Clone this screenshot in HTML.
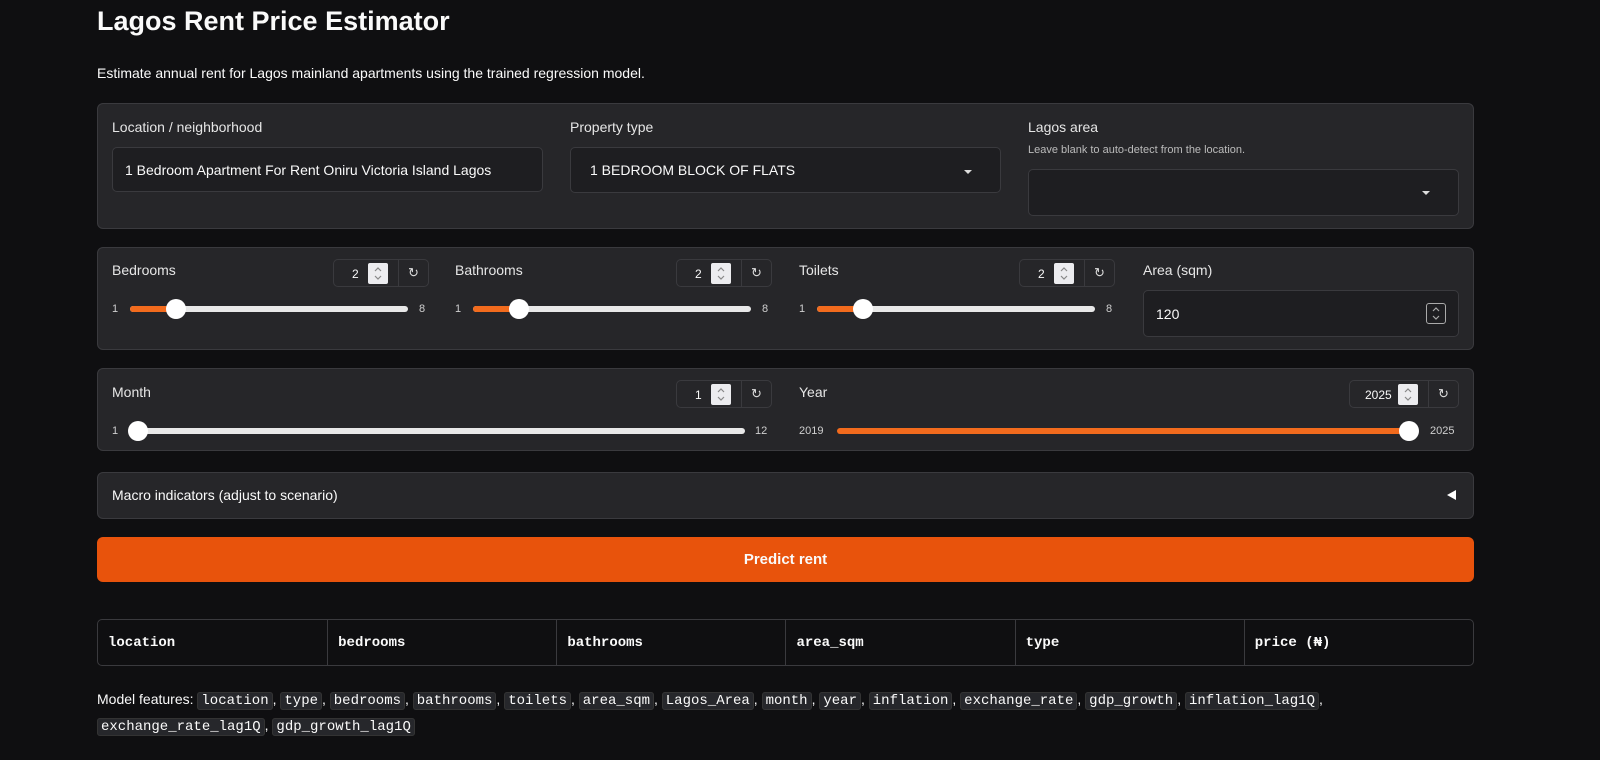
<!DOCTYPE html>
<html><head><meta charset="utf-8"><style>
*{box-sizing:border-box;margin:0;padding:0}
body{width:1600px;height:760px;background:#0f0f11;color:#fafafa;font-family:"Liberation Sans",sans-serif;position:relative;overflow:hidden}
.a{position:absolute}
.panel{position:absolute;left:97px;width:1377px;background:#262629;border:1px solid #3a3a3e;border-radius:6px}
.lbl{position:absolute;font-size:14px;color:#e6e6e6}
.inp{position:absolute;background:#1e1e21;border:1px solid #3a3a3e;border-radius:5px;font-size:14px;color:#fafafa;padding-left:12px;display:flex;align-items:center}
.caret{position:absolute;width:0;height:0;border-left:4px solid transparent;border-right:4px solid transparent;border-top:4px solid #ddd}
.track{position:absolute;height:6px;border-radius:3px;background:#e8e8e8}
.fill{position:absolute;height:6px;border-radius:3px;background:#f26b1d}
.knob{position:absolute;width:20px;height:20px;border-radius:50%;background:#fff}
.tk{position:absolute;font-size:11px;color:#cfcfcf}
.num{position:absolute;height:28px;border:1px solid #3a3a3e;border-radius:5px;font-size:12px}
.num .v{position:absolute;top:7px}
.num .sp{position:absolute;top:3px;width:20px;height:21px;background:#ececef;border-radius:2px}
.num .sp svg{position:absolute;left:5px;top:3px}
.num .rs{position:absolute;top:0;height:26px;border-left:1px solid #3a3a3e;width:30px;text-align:center;line-height:26px;font-size:13px;color:#ddd}
code{font-family:"Liberation Mono",monospace;background:#26272b;border:1px solid #333;border-radius:3px;padding:0 3px;font-size:14px}
table{table-layout:fixed}
th{font-family:"Liberation Mono",monospace;font-weight:bold;font-size:14px;text-align:left;padding-left:10px;border-left:1px solid #3a3a3e}
th:first-child{border-left:none}
</style></head><body>
<div class="a" style="left:97px;top:6px;font-size:27px;font-weight:bold">Lagos Rent Price Estimator</div>
<div class="a" style="left:97px;top:65px;font-size:14px">Estimate annual rent for Lagos mainland apartments using the trained regression model.</div>

<div class="panel" style="top:103px;height:126px"></div>
<div class="lbl" style="left:112px;top:119px">Location / neighborhood</div>
<div class="inp" style="left:112px;top:147px;width:431px;height:45px">1 Bedroom Apartment For Rent Oniru Victoria Island Lagos</div>
<div class="lbl" style="left:570px;top:119px">Property type</div>
<div class="inp" style="left:570px;top:147px;width:431px;height:46px;padding-left:19px">1 BEDROOM BLOCK OF FLATS</div>
<div class="caret" style="left:964px;top:170px"></div>
<div class="lbl" style="left:1028px;top:119px">Lagos area</div>
<div class="a" style="left:1028px;top:144px;font-size:11px;color:#bbb">Leave blank to auto-detect from the location.</div>
<div class="inp" style="left:1028px;top:169px;width:431px;height:47px"></div>
<div class="caret" style="left:1422px;top:191px"></div>

<div class="panel" style="top:247px;height:103px"></div>
<div class="lbl" style="left:112px;top:262px">Bedrooms</div>
<div class="num" style="left:333px;top:259px;width:96px"><span class="v" style="left:18px">2</span><div class="sp" style="left:34px"><svg width="10" height="15" viewBox="0 0 10 15" fill="none" stroke="#888" stroke-width="1.2"><path d="M2 5l3-3 3 3M2 10l3 3 3-3"/></svg></div><div class="rs" style="left:64px">↻</div></div>
<div class="tk" style="left:112px;top:303px">1</div><div class="track" style="left:130px;top:306px;width:278px"></div><div class="fill" style="left:130px;top:306px;width:46px"></div><div class="knob" style="left:166px;top:299px"></div><div class="tk" style="left:419px;top:303px">8</div>
<div class="lbl" style="left:455px;top:262px">Bathrooms</div>
<div class="num" style="left:676px;top:259px;width:96px"><span class="v" style="left:18px">2</span><div class="sp" style="left:34px"><svg width="10" height="15" viewBox="0 0 10 15" fill="none" stroke="#888" stroke-width="1.2"><path d="M2 5l3-3 3 3M2 10l3 3 3-3"/></svg></div><div class="rs" style="left:64px">↻</div></div>
<div class="tk" style="left:455px;top:303px">1</div><div class="track" style="left:473px;top:306px;width:278px"></div><div class="fill" style="left:473px;top:306px;width:46px"></div><div class="knob" style="left:509px;top:299px"></div><div class="tk" style="left:762px;top:303px">8</div>
<div class="lbl" style="left:799px;top:262px">Toilets</div>
<div class="num" style="left:1019px;top:259px;width:96px"><span class="v" style="left:18px">2</span><div class="sp" style="left:34px"><svg width="10" height="15" viewBox="0 0 10 15" fill="none" stroke="#888" stroke-width="1.2"><path d="M2 5l3-3 3 3M2 10l3 3 3-3"/></svg></div><div class="rs" style="left:64px">↻</div></div>
<div class="tk" style="left:799px;top:303px">1</div><div class="track" style="left:817px;top:306px;width:278px"></div><div class="fill" style="left:817px;top:306px;width:46px"></div><div class="knob" style="left:853px;top:299px"></div><div class="tk" style="left:1106px;top:303px">8</div>
<div class="lbl" style="left:1143px;top:262px">Area (sqm)</div>
<div class="inp" style="left:1143px;top:290px;width:316px;height:47px">120</div>
<div class="a" style="left:1426px;top:303px;width:20px;height:21px;border:1px solid #aaa;border-radius:3px"><svg style="position:absolute;left:4px;top:2px" width="10" height="15" viewBox="0 0 10 15" fill="none" stroke="#aaa" stroke-width="1.2"><path d="M2 5l3-3 3 3M2 10l3 3 3-3"/></svg></div>

<div class="panel" style="top:368px;height:83px"></div>
<div class="lbl" style="left:112px;top:384px">Month</div>
<div class="num" style="left:676px;top:380px;width:96px"><span class="v" style="left:18px">1</span><div class="sp" style="left:34px"><svg width="10" height="15" viewBox="0 0 10 15" fill="none" stroke="#888" stroke-width="1.2"><path d="M2 5l3-3 3 3M2 10l3 3 3-3"/></svg></div><div class="rs" style="left:64px">↻</div></div>
<div class="tk" style="left:112px;top:425px">1</div><div class="track" style="left:130px;top:428px;width:615px"></div><div class="knob" style="left:128px;top:421px"></div><div class="tk" style="left:755px;top:425px">12</div>
<div class="lbl" style="left:799px;top:384px">Year</div>
<div class="num" style="left:1349px;top:380px;width:110px"><span class="v" style="left:15px">2025</span><div class="sp" style="left:48px"><svg width="10" height="15" viewBox="0 0 10 15" fill="none" stroke="#888" stroke-width="1.2"><path d="M2 5l3-3 3 3M2 10l3 3 3-3"/></svg></div><div class="rs" style="left:78px">↻</div></div>
<div class="tk" style="left:799px;top:425px">2019</div><div class="fill" style="left:837px;top:428px;width:580px"></div><div class="knob" style="left:1399px;top:421px"></div><div class="tk" style="left:1430px;top:425px">2025</div>

<div class="panel" style="top:472px;height:47px"></div>
<div class="a" style="left:112px;top:487px;font-size:14px">Macro indicators (adjust to scenario)</div>
<div class="a" style="left:1447px;top:490px;width:0;height:0;border-top:5px solid transparent;border-bottom:5px solid transparent;border-right:9px solid #fff"></div>

<div class="a" style="left:97px;top:537px;width:1377px;height:45px;background:#e8530c;border-radius:6px;text-align:center;line-height:45px;font-size:15px;font-weight:bold">Predict rent</div>

<table class="a" style="left:97px;top:619px;width:1377px;height:47px;border:1px solid #3a3a3e;border-radius:5px;border-collapse:separate;border-spacing:0">
<tr><th>location</th><th>bedrooms</th><th>bathrooms</th><th>area_sqm</th><th>type</th><th>price (₦)</th></tr></table>

<div class="a" style="left:97px;top:687px;width:1380px;font-size:14px;line-height:24px">Model features: <code>location</code>, <code>type</code>, <code>bedrooms</code>, <code>bathrooms</code>, <code>toilets</code>, <code>area_sqm</code>, <code>Lagos_Area</code>, <code>month</code>, <code>year</code>, <code>inflation</code>, <code>exchange_rate</code>, <code>gdp_growth</code>, <code>inflation_lag1Q</code>, <code>exchange_rate_lag1Q</code>, <code>gdp_growth_lag1Q</code></div>
</body></html>
